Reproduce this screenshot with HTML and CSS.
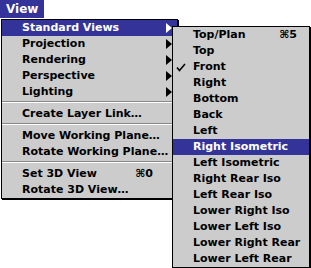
FILE: index.html
```html
<!DOCTYPE html>
<html lang="en">
<head>
  <meta charset="UTF-8">
  <title>View Menu</title>
  <link rel="stylesheet" href="styles.css">
</head>
<body>
  <div class="menubar">
    <div class="menu-title">View</div>
  </div>

  <div class="menu main-menu">
    <div class="item active"><span class="label">Standard Views</span><span class="key"></span><span class="arrow-slot"><span class="arrow"></span></span></div>
    <div class="item"><span class="label">Projection</span><span class="key"></span><span class="arrow-slot"><span class="arrow"></span></span></div>
    <div class="item"><span class="label">Rendering</span><span class="key"></span><span class="arrow-slot"><span class="arrow"></span></span></div>
    <div class="item"><span class="label">Perspective</span><span class="key"></span><span class="arrow-slot"><span class="arrow"></span></span></div>
    <div class="item"><span class="label">Lighting</span><span class="key"></span><span class="arrow-slot"><span class="arrow"></span></span></div>
    <div class="sep"></div>
    <div class="item"><span class="label">Create Layer Link…</span></div>
    <div class="sep"></div>
    <div class="item"><span class="label">Move Working Plane…</span></div>
    <div class="item"><span class="label">Rotate Working Plane…</span></div>
    <div class="sep"></div>
    <div class="item"><span class="label">Set 3D View</span><span class="key">⌘0</span><span class="arrow-slot"></span></div>
    <div class="item"><span class="label">Rotate 3D View…</span></div>
  </div>

  <div class="menu sub-menu">
    <div class="item"><span class="mark"></span><span class="label">Top/Plan</span><span class="key">⌘5</span></div>
    <div class="item"><span class="mark"></span><span class="label">Top</span></div>
    <div class="item"><span class="mark"><svg width="10" height="9" viewBox="0 0 10 9"><path d="M1 4.5 L3.5 7.5 L9 1" fill="none" stroke="#000" stroke-width="1.6"/></svg></span><span class="label">Front</span></div>
    <div class="item"><span class="mark"></span><span class="label">Right</span></div>
    <div class="item"><span class="mark"></span><span class="label">Bottom</span></div>
    <div class="item"><span class="mark"></span><span class="label">Back</span></div>
    <div class="item"><span class="mark"></span><span class="label">Left</span></div>
    <div class="item active"><span class="mark"></span><span class="label">Right Isometric</span></div>
    <div class="item"><span class="mark"></span><span class="label">Left Isometric</span></div>
    <div class="item"><span class="mark"></span><span class="label">Right Rear Iso</span></div>
    <div class="item"><span class="mark"></span><span class="label">Left Rear Iso</span></div>
    <div class="item"><span class="mark"></span><span class="label">Lower Right Iso</span></div>
    <div class="item"><span class="mark"></span><span class="label">Lower Left Iso</span></div>
    <div class="item"><span class="mark"></span><span class="label">Lower Right Rear</span></div>
    <div class="item"><span class="mark"></span><span class="label">Lower Left Rear</span></div>
  </div>
</body>
</html>
```

FILE: styles.css
```css
* {
  box-sizing: border-box;
  font-family: 'DejaVu Sans', sans-serif;
}

body {
  margin: 0;
  background: #fff;
  width: 311px;
  height: 268px;
  overflow: hidden;
  position: relative;
  font-size: 11px;
  font-weight: bold;
}

.menubar {
  display: flex;
  height: 18px;
}

.menu-title {
  width: 44px;
  height: 18px;
  line-height: 18px;
  padding-left: 6px;
  font-size: 12px;
  background: #333399;
  color: #fff;
}

/* menus drop over the page */
.menu {
  position: absolute;
  background: #cccccc;
  border: 1px solid #000;
  box-shadow: 1px 1px 0 #000;
}

.main-menu {
  left: 1px;
  top: 19px;
  width: 177px;
}

.sub-menu {
  left: 172px;
  top: 26px;
  width: 138px;
}

.item {
  display: flex;
  align-items: center;
  height: 16px;
  line-height: 16px;
  color: #000;
  white-space: nowrap;
}

.main-menu .item {
  padding-left: 20px;
}

.item.active {
  background: #333399;
  color: #fff;
}

.label {
  flex: 1;
}

.key {
  text-align: right;
}

.sub-menu .key {
  padding-right: 12px;
}

.arrow-slot {
  width: 24px;
  display: flex;
  justify-content: flex-end;
  padding-right: 5px;
}

.arrow {
  width: 0;
  height: 0;
  border-left: 6px solid #000;
  border-top: 5px solid transparent;
  border-bottom: 5px solid transparent;
}

.item.active .arrow {
  border-left-color: #fff;
}

.mark {
  width: 20px;
  display: flex;
  justify-content: flex-start;
  padding-left: 3px;
}

.sep {
  height: 6px;
  padding-top: 1px;
}

.sep::before {
  content: "";
  display: block;
  height: 1px;
  background: #888;
  border-bottom: 1px solid #fff;
  box-sizing: content-box;
}
```
